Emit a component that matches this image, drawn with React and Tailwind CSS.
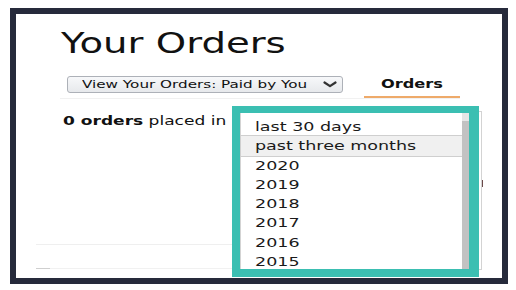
import React from "react";

const font = { fontFamily: '"DejaVu Sans", Verdana, sans-serif' };

const ranges = [
  "last 30 days",
  "past three months",
  "2020",
  "2019",
  "2018",
  "2017",
  "2016",
  "2015",
];

function Chevron() {
  return (
    <svg width="14" height="7" viewBox="0 0 14 7" className="block">
      <path d="M1.5 1.5 L7 5.2 L12.5 1.5" fill="none" stroke="#333" strokeWidth="2.2" strokeLinecap="round" strokeLinejoin="round" />
    </svg>
  );
}

function RangeList() {
  return (
    <div className="absolute left-[224px] top-[97px] w-[242px] h-[159px] bg-white border border-[#d3d3d3] flex">
      <div className="w-[221px] pt-[5px]">
        {ranges.map((r, i) => (
          <div
            key={r}
            className={
              "h-[19.25px] pl-[14px] text-[12.5px] leading-[19.25px] text-[#1a1a1a] whitespace-nowrap " +
              (i === 1 ? "bg-[#f0f0f0] outline outline-1 outline-[#cfcfcf]" : "")
            }
          >
            <span className="inline-block origin-left scale-x-[1.4]">{r}</span>
          </div>
        ))}
      </div>
      <div className="w-[8px] flex flex-col">
        <div className="h-[9px] bg-[#e6e6e6]" />
        <div className="flex-1 bg-[#c2c2c2]" />
      </div>
    </div>
  );
}

export default function App() {
  return (
    <div className="w-[516px] h-[290px] bg-white overflow-hidden pt-[8px]" style={font}>
      <div className="relative ml-[10px] w-[498px] h-[276px] border-[6px] border-[#262a3b] bg-white text-[#111]">
        <div className="mt-[14px] pl-[45px] h-[32px] text-[28px] leading-[32px] whitespace-nowrap">
          <span className="inline-block origin-left scale-x-[1.38]">Your Orders</span>
        </div>

        <div className="mt-[16px] ml-[44px] w-[400px] flex items-start border-b border-[#f1f1f1]">
          <div className="relative ml-[7px] w-[276px] h-[17px] rounded-[3px] border border-[#adb1b8] bg-gradient-to-b from-[#f7f8fa] to-[#e7e9ec] pl-[14px] text-[11px] leading-[15px] whitespace-nowrap">
            <span className="inline-block origin-left scale-x-[1.38]">View Your Orders: Paid by You</span>
            <span className="absolute right-[5px] top-[4px]">
              <Chevron />
            </span>
          </div>
          <div className="ml-[21px] w-[96px] h-[22px] border-b-2 border-[#eeaa6a] flex justify-center pt-[1px] text-[12px] leading-[15px] font-bold">
            <span className="inline-block scale-x-[1.35]">Orders</span>
          </div>
        </div>

        <div className="mt-[14px] ml-[47px] text-[12px] leading-[16px] whitespace-nowrap">
          <span className="inline-block origin-left scale-x-[1.42]">
            <span className="font-bold">0 orders</span> placed in
          </span>
        </div>

        <div className="mt-[115px] ml-[20px] w-[430px] h-px bg-[#efefef]" />
        <div className="mt-[23px] ml-[20px] w-[430px] h-px bg-[#f1f1f1] flex">
          <div className="w-[14px] h-px bg-[#cfcfcf]" />
        </div>

        <RangeList />

        <div className="absolute left-[216px] top-[92px] w-[247px] h-[171px] border-t-[7px] border-l-[8px] border-r-[10px] border-b-[8px] border-[#3bbfb2]" />

        <div className="absolute left-[466px] top-[166px] w-px h-[7px] bg-[#6b4a4a]" />
      </div>
    </div>
  );
}
